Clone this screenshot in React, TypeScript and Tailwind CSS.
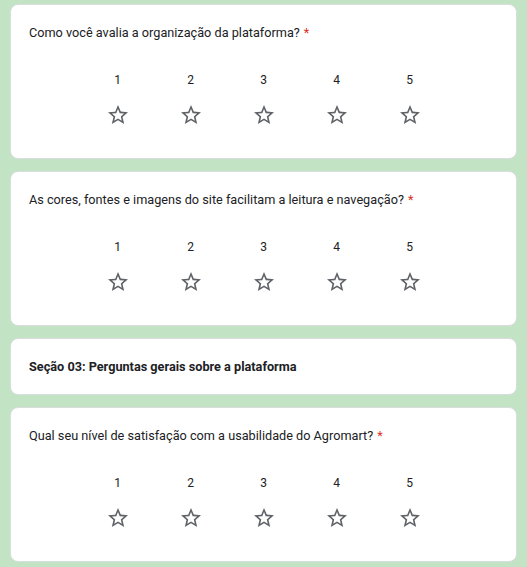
import React from "react";

const questions = [
  "Como você avalia a organização da plataforma?",
  "As cores, fontes e imagens do site facilitam a leitura e navegação?",
];

const StarOutline = () => (
  <svg viewBox="0 0 24 24" className="h-6 w-6 fill-[#5f6368]">
    <path d="M22 9.24l-7.19-.62L12 2 9.19 8.63 2 9.24l5.46 4.73L5.82 21 12 17.27 18.18 21l-1.63-7.03L22 9.24zM12 15.4l-3.76 2.27 1-4.28-3.32-2.88 4.38-.38L12 6.1l1.71 4.04 4.38.38-3.32 2.88 1 4.28L12 15.4z" />
  </svg>
);

const RatingCard = ({ title }: { title: string }) => (
  <div className="rounded-lg border border-[#dadce0] bg-white px-[18px] pb-[31px] pt-[18px]">
    <div className="h-5 text-[12.7px] leading-5 text-[#202124]">
      {title}
      <span className="ml-1 text-[#d93025]">*</span>
    </div>
    <div className="mt-[27px] flex justify-center">
      {[1, 2, 3, 4, 5].map((n) => (
        <div key={n} className="flex w-[73px] flex-col items-center">
          <span className="h-5 text-[12px] leading-5 text-[#202124]">{n}</span>
          <div className="mt-[13px]">
            <StarOutline />
          </div>
        </div>
      ))}
    </div>
  </div>
);

export default function App() {
  return (
    <div className="min-h-screen bg-[#c2e4c4] px-[10px] pt-1 font-['Roboto',sans-serif]">
      <div className="flex flex-col gap-3">
        {questions.map((q) => (
          <RatingCard key={q} title={q} />
        ))}
        <div className="rounded-lg border border-[#dadce0] bg-white px-[18px] pb-[17px] pt-[18px]">
          <div className="h-5 text-[12.7px] font-bold leading-5 text-[#202124]">
            Seção 03: Perguntas gerais sobre a plataforma
          </div>
        </div>
        <RatingCard title="Qual seu nível de satisfação com a usabilidade do Agromart?" />
      </div>
    </div>
  );
}
